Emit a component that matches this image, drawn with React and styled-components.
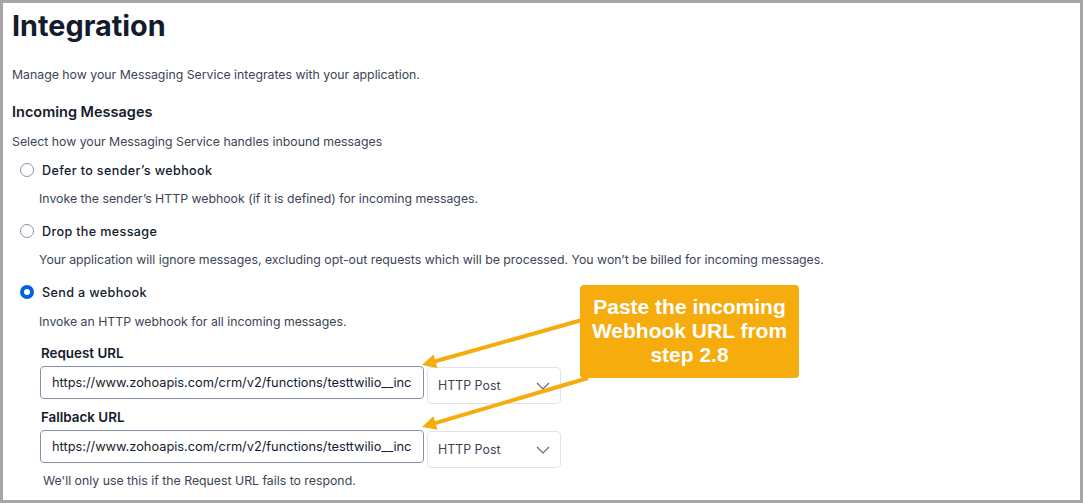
import styled, { createGlobalStyle } from "styled-components"

const GlobalStyle = createGlobalStyle`
  * { box-sizing: border-box; }
  html, body { margin: 0; padding: 0; background: #ffffff; }
  body { font-family: Inter, "Noto Sans", sans-serif; color: #121c2d; }
`

const Frame = styled.div`
  position: relative;
  width: 1083px;
  height: 503px;
  border: 3px solid #a6a6a6;
  padding: 6px 9px 0;
  overflow: hidden;
`

const Title = styled.h1`
  margin: 0;
  font-size: 28.8px;
  line-height: 34px;
  font-weight: 700;
`

const Text = styled.p`
  margin: ${(p) => p.$mt || 0}px 0 0 ${(p) => p.$ml || 0}px;
  font-size: 12.3px;
  line-height: 20px;
  color: ${(p) => (p.$muted ? "#3c4455" : "#121c2d")};
`

const SectionTitle = styled.h2`
  margin: 17px 0 0;
  font-size: 14.5px;
  line-height: 20px;
  font-weight: 600;
`

const RadioRow = styled.label`
  display: flex;
  align-items: center;
  gap: 8px;
  margin: ${(p) => p.$mt}px 0 0 8px;
  height: 20px;
  font-size: 12.6px;
  font-weight: 500;
  letter-spacing: 0.35px;
`

const Radio = styled.span`
  width: 14px;
  height: 14px;
  border-radius: 50%;
  flex: none;
  border: ${(p) => (p.$checked ? "4px solid #0263e0" : "1px solid #8891aa")};
  background: #fff;
`

const FieldLabel = styled.div`
  margin: ${(p) => p.$mt}px 0 0 29px;
  font-size: 13.4px;
  line-height: 20px;
  font-weight: 600;
`

const FieldRow = styled.div`
  display: flex;
  align-items: flex-start;
  gap: 3px;
  margin: 3px 0 0 28px;
`

const UrlInput = styled.div`
  width: 384px;
  height: 33px;
  border: 1px solid #8891aa;
  border-radius: 4px;
  padding: 0 11px;
  display: flex;
  align-items: center;
  font-size: 12.8px;
  color: #121c2d;
  white-space: nowrap;
  overflow: hidden;
`

const Select = styled.div`
  margin-top: 1px;
  width: 134px;
  height: 37px;
  border: 1px solid #e1e3ea;
  border-radius: 4px;
  padding: 0 10px;
  display: flex;
  align-items: center;
  justify-content: space-between;
  font-size: 12.4px;
  color: #3c4455;
`

const Callout = styled.div`
  position: absolute;
  left: 577px;
  top: 282px;
  width: 219px;
  height: 93px;
  background: #f6ac0d;
  border-radius: 4px;
  color: #ffffff;
  font-family: "Liberation Sans", Arial, sans-serif;
  font-weight: 700;
  font-size: 21px;
  line-height: 24px;
  text-align: center;
  padding-top: 10px;
`

const Overlay = styled.svg`
  position: absolute;
  left: -3px;
  top: -3px;
  pointer-events: none;
`

const Chevron = () => (
  <svg width="14" height="8" viewBox="0 0 14 8">
    <path d="M1 1 L7 7 L13 1" fill="none" stroke="#606b85" strokeWidth="1.2" />
  </svg>
)

const arrowPoints = (x1, y1, x2, y2) => {
  const dx = x2 - x1
  const dy = y2 - y1
  const len = Math.hypot(dx, dy)
  const ux = dx / len
  const uy = dy / len
  const bx = x2 - ux * 14
  const by = y2 - uy * 14
  const nx = -uy * 7
  const ny = ux * 7
  return {
    line: [x1, y1, bx + ux * 2, by + uy * 2],
    head: `${x2},${y2} ${bx + nx},${by + ny} ${bx - nx},${by - ny}`,
  }
}

const Arrow = ({ from, to }) => {
  const a = arrowPoints(from[0], from[1], to[0], to[1])
  return (
    <g>
      <line x1={a.line[0]} y1={a.line[1]} x2={a.line[2]} y2={a.line[3]} stroke="#f6ac0d" strokeWidth="4" />
      <polygon points={a.head} fill="#f6ac0d" />
    </g>
  )
}

const Field = ({ label, mt }) => (
  <>
    <FieldLabel $mt={mt}>{label}</FieldLabel>
    <FieldRow>
      <UrlInput>https://www.zohoapis.com/crm/v2/functions/testtwilio__inc</UrlInput>
      <Select>
        <span>HTTP Post</span>
        <Chevron />
      </Select>
    </FieldRow>
  </>
)

export default function App() {
  return (
    <>
      <GlobalStyle />
      <Frame>
        <Title>Integration</Title>
        <Text $mt={22} $muted>Manage how your Messaging Service integrates with your application.</Text>
        <SectionTitle>Incoming Messages</SectionTitle>
        <Text $mt={10} $muted>Select how your Messaging Service handles inbound messages</Text>

        <RadioRow $mt={8}><Radio />Defer to sender’s webhook</RadioRow>
        <Text $mt={9} $ml={27} $muted>Invoke the sender’s HTTP webhook (if it is defined) for incoming messages.</Text>

        <RadioRow $mt={12}><Radio />Drop the message</RadioRow>
        <Text $mt={9} $ml={27} $muted>
          Your application will ignore messages, excluding opt-out requests which will be processed. You won’t be billed for incoming messages.
        </Text>

        <RadioRow $mt={12}><Radio $checked />Send a webhook</RadioRow>
        <Text $mt={10} $ml={27} $muted>Invoke an HTTP webhook for all incoming messages.</Text>

        <Field label="Request URL" mt={11} />
        <Field label="Fallback URL" mt={3} />
        <Text $mt={3} $ml={31} $muted>We'll only use this if the Request URL fails to respond.</Text>

        <Callout>
          Paste the incoming
          <br />
          Webhook URL from
          <br />
          step 2.8
        </Callout>
        <Overlay width="1083" height="503">
          <Arrow from={[582, 320]} to={[422, 365]} />
          <Arrow from={[588, 378]} to={[422, 427]} />
        </Overlay>
      </Frame>
    </>
  )
}
